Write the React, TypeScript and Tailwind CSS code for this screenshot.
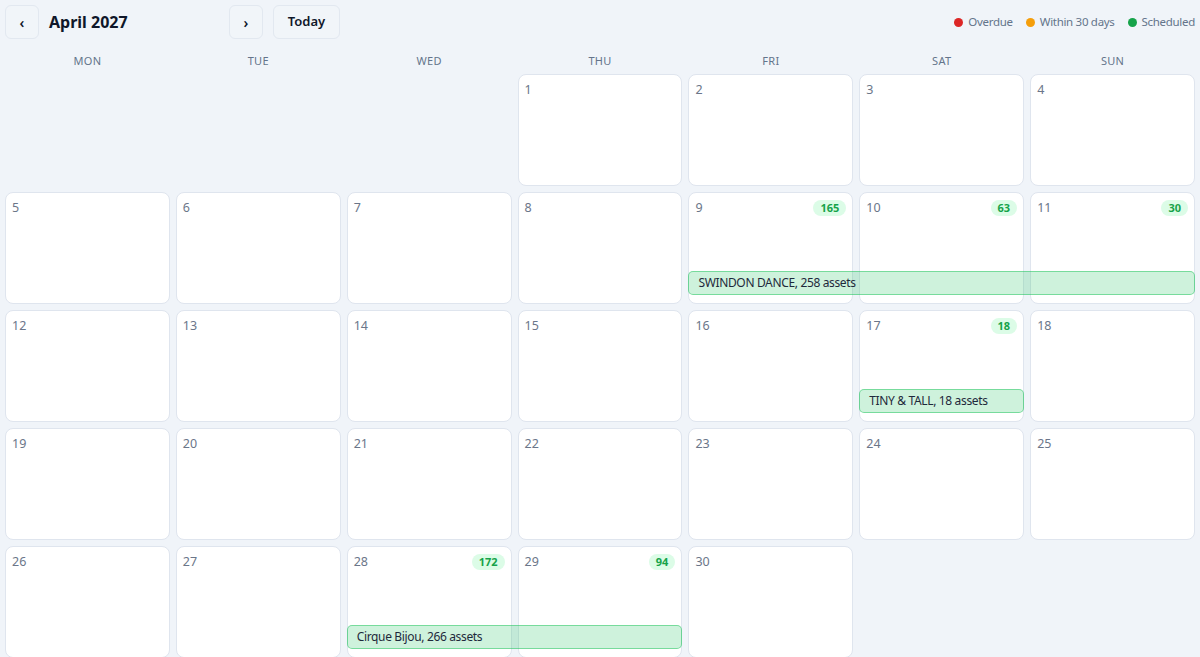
import React from "react";

type Cell = { day: number; count?: number } | null;
type Bar = { start: number; span: number; label: string };

const weeks: { cells: Cell[]; bars: Bar[] }[] = [
  {
    cells: [null, null, null, { day: 1 }, { day: 2 }, { day: 3 }, { day: 4 }],
    bars: [],
  },
  {
    cells: [
      { day: 5 },
      { day: 6 },
      { day: 7 },
      { day: 8 },
      { day: 9, count: 165 },
      { day: 10, count: 63 },
      { day: 11, count: 30 },
    ],
    bars: [{ start: 4, span: 3, label: "SWINDON DANCE, 258 assets" }],
  },
  {
    cells: [
      { day: 12 },
      { day: 13 },
      { day: 14 },
      { day: 15 },
      { day: 16 },
      { day: 17, count: 18 },
      { day: 18 },
    ],
    bars: [{ start: 5, span: 1, label: "TINY & TALL, 18 assets" }],
  },
  {
    cells: [
      { day: 19 },
      { day: 20 },
      { day: 21 },
      { day: 22 },
      { day: 23 },
      { day: 24 },
      { day: 25 },
    ],
    bars: [],
  },
  {
    cells: [
      { day: 26 },
      { day: 27 },
      { day: 28, count: 172 },
      { day: 29, count: 94 },
      { day: 30 },
      null,
      null,
    ],
    bars: [{ start: 2, span: 2, label: "Cirque Bijou, 266 assets" }],
  },
];

const colStart = [
  "col-start-1",
  "col-start-2",
  "col-start-3",
  "col-start-4",
  "col-start-5",
  "col-start-6",
  "col-start-7",
];
const colSpan = ["col-span-1", "col-span-2", "col-span-3", "col-span-4"];

const dayNames = ["MON", "TUE", "WED", "THU", "FRI", "SAT", "SUN"];

function Legend() {
  const items = [
    { label: "Overdue", color: "bg-[#dc2626]" },
    { label: "Within 30 days", color: "bg-[#f59e0b]" },
    { label: "Scheduled", color: "bg-[#16a34a]" },
  ];
  return (
    <div className="flex items-center gap-[13px]">
      {items.map((it) => (
        <div key={it.label} className="flex items-center gap-[5px]">
          <span className={`w-[9px] h-[9px] rounded-full ${it.color}`} />
          <span className="text-[11.5px] tracking-[-0.3px] text-[#64748b]">{it.label}</span>
        </div>
      ))}
    </div>
  );
}

export default function App() {
  return (
    <div
      className="min-h-screen bg-[#f0f4f9] px-[5px] pt-[5px]"
      style={{ fontFamily: '"Noto Sans", "Open Sans", sans-serif' }}
    >
      {/* toolbar */}
      <div className="flex items-center justify-between h-[34px]">
        <div className="flex items-center gap-[10px]">
          <button className="w-[34px] h-[34px] rounded-md border border-[#e2e8f0] bg-[#f1f5f9] text-[#0f172a] text-[14px] font-semibold flex items-center justify-center">
            ‹
          </button>
          <div className="w-[170px] text-[16px] font-bold text-[#0f172a]">
            April 2027
          </div>
          <button className="w-[34px] h-[34px] rounded-md border border-[#e2e8f0] bg-[#f1f5f9] text-[#0f172a] text-[14px] font-semibold flex items-center justify-center">
            ›
          </button>
          <button className="w-[67px] h-[34px] rounded-md border border-[#e2e8f0] bg-[#f1f5f9] text-[#0f172a] text-[13px] font-semibold flex items-center justify-center">
            Today
          </button>
        </div>
        <Legend />
      </div>

      {/* weekday labels */}
      <div className="grid grid-cols-7 gap-[6px] mt-[14px] mb-[5px] h-[16px]">
        {dayNames.map((d) => (
          <div
            key={d}
            className="text-center text-[11px] leading-[16px] tracking-[0.3px] text-[#64748b]"
          >
            {d}
          </div>
        ))}
      </div>

      {/* month grid */}
      <div className="flex flex-col gap-[6px]">
        {weeks.map((w, wi) => (
          <div key={wi} className="grid grid-cols-7 grid-rows-1 gap-x-[6px] h-[112px]">
            {w.cells.map((c, ci) =>
              c ? (
                <div
                  key={ci}
                  className={`${colStart[ci]} row-start-1 bg-white border border-[#dfe5ee] rounded-lg px-[6px] pt-[7px] flex items-start justify-between`}
                >
                  <span className="text-[12.5px] leading-[16px] text-[#6b7689]">
                    {c.day}
                  </span>
                  {c.count !== undefined && (
                    <span className="h-[16px] px-[7px] rounded-full bg-[#dcfce7] text-[#16a34a] text-[11px] font-bold leading-[16px]">
                      {c.count}
                    </span>
                  )}
                </div>
              ) : (
                <div key={ci} className={`${colStart[ci]} row-start-1`} />
              )
            )}
            {w.bars.map((b) => (
              <div
                key={b.label}
                className={`${colStart[b.start]} ${colSpan[b.span - 1]} row-start-1 self-end mb-[9px] h-[24px] rounded-[5px] border border-[#22c55e]/50 bg-[#22c55e]/22 px-[9px] flex items-center text-[12px] tracking-[-0.35px] text-[#1e293b] whitespace-nowrap`}
              >
                {b.label}
              </div>
            ))}
          </div>
        ))}
      </div>
    </div>
  );
}
